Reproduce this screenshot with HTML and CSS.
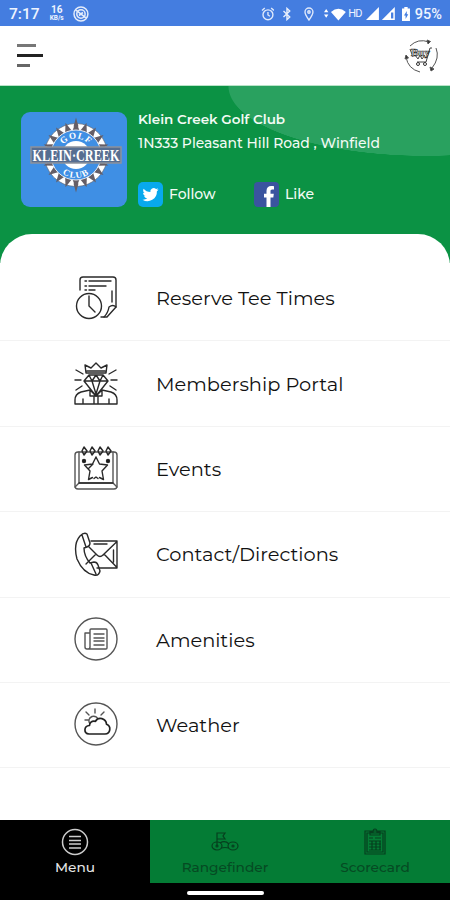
FILE: index.html
```html
<!DOCTYPE html>
<html lang="en">
<head>
<meta charset="utf-8">
<meta name="viewport" content="width=device-width, initial-scale=1">
<title>Klein Creek Golf Club</title>
<link rel="stylesheet" href="styles.css">
</head>
<body>
<div class="app">
  <div class="status">
    <span class="time">7:17</span>
    <span class="speed"><b>16</b><small>KB/s</small></span>
    <svg class="dnd" width="16" height="16" viewBox="0 0 16 16" fill="none" stroke="#e4ecfa"><circle cx="8" cy="8" r="7" stroke-width="1.5"/><circle cx="8" cy="8" r="4.2" stroke-width="1.5"/><path d="M3 4l10 8M6 9.5l4-3" stroke-width="1.6"/></svg>
    <svg class="alarm" width="14" height="14" viewBox="0 0 14 14" fill="none" stroke="#dfe9fb" stroke-width="1.4"><circle cx="7" cy="7.8" r="5"/><path d="M7 5v3l2 1.3M1 3.4L3.8 1M13 3.4L10.2 1"/></svg>
    <svg class="bt" width="10" height="14" viewBox="0 0 10 14" fill="none" stroke="#e8effc" stroke-width="1.4"><path d="M1.5 4l6.3 6L5 12.6V1.4L7.8 4 1.5 10"/></svg>
    <svg class="pin" width="10" height="14" viewBox="0 0 10 14" fill="none" stroke="#dfe9fb" stroke-width="1.4"><path d="M5 13C2 9 1 7 1 5a4 4 0 018 0c0 2-1 4-4 8z"/><circle cx="5" cy="5" r="1.2"/></svg>
    <svg class="net" width="22" height="14" viewBox="0 0 22 14" fill="#fff"><path d="M0 5.2L2.2 2l2.2 3.200zM0 7.500h4.400L2.200 10.700zM7 5q7.500-6.500 15 0l-7.500 8.500z"/></svg>
    <span class="hd">HD</span>
    <svg class="sig" width="30" height="14" viewBox="0 0 30 14"><path d="M13 0v13H0zM29 0v13H16z" fill="#fff"/><path d="M25.200 5.500h2.300v6h-2.300z" fill="#447de0"/></svg>
    <svg class="bat" width="8" height="14" viewBox="0 0 8 14"><path d="M2.300 0h3.400v1.500H8V14H0V1.500h2.300z" fill="#fff"/><path d="M4.800 4L2 8.500h1.600V12L6.300 7.300H4.800z" fill="#447de0"/></svg>
    <span class="pct">95%</span>
  </div>

  <header class="bar">
    <div class="burger"><i></i><i></i><i></i></div>
    <svg width="35" height="36" viewBox="0 0 35 36" fill="none" stroke="#555" stroke-width="1">
      <path d="M6 8Q14 0 25 4M32 10q4 10-4 20M16 34Q4 31 2 19" />
      <path d="M23 2l3.500 1.500L24 6zM26 29l1 4 3-2zM1 21l1-4 2.500 3z" fill="#333"/>
      <path d="M28 10h-2l-4 14h-9M9 19L6 11" stroke="#444"/>
      <circle cx="14" cy="26" r="1.500" stroke="#333"/><circle cx="21" cy="26" r="1.500" stroke="#333"/>
      <path d="M11 17l3 4 2-4 2 4 3-4" stroke="#444"/>
      <text x="7" y="18" class="buy">Buy</text>
    </svg>
  </header>

  <section class="hero">
    <svg class="logo" width="106" height="95" viewBox="0 0 106 95">
      <defs>
        <g id="spikes"><path id="sp" d="M-3.600-24L0-34 3.600-24z"/><use href="#sp" transform="rotate(18)"/><use href="#sp" transform="rotate(36)"/><use href="#sp" transform="rotate(54)"/><use href="#sp" transform="rotate(72)"/></g>
        <path id="arcTop" d="M-16.500 0A16.500 16.500 0 0116.500 0"/>
        <path id="arcBottom" d="M-23 0A23 23 0 0023 0"/>
      </defs>
      <g transform="translate(55 43)">
        <circle r="31.500" fill="#fff" stroke="#666a75" stroke-width=".7"/>
        <g fill="#655e66"><use href="#spikes"/><use href="#spikes" transform="rotate(90)"/><use href="#spikes" transform="rotate(180)"/><use href="#spikes" transform="rotate(270)"/></g>
        <path d="M0-37.500l2.500 9h-5zM0 37.500l2.500-9h-5z" fill="#655e66"/>
        <circle r="25" fill="#3f8fe4" stroke="#e2e9f3" stroke-width="1"/>
        <circle r="14" fill="#fff"/>
        <text class="arc"><textPath href="#arcTop" startOffset="50%">GOLF</textPath></text>
        <text class="arc"><textPath href="#arcBottom" startOffset="50%">CLUB</textPath></text>
        <path d="M-45-8h90V8h-90z" fill="#566e91" stroke="#8c939d" stroke-width="1.500"/>
        <text transform="scale(.72 1)" y="6" class="band">KLEIN·CREEK</text>
      </g>
    </svg>
    <div class="info">
      <div class="name">Klein Creek Golf Club</div>
      <div class="addr">1N333 Pleasant Hill Road , Winfield</div>
      <div class="social">
        <svg width="25" height="25" viewBox="0 0 25 25"><rect width="25" height="25" rx="5" fill="#08a9ed"/><path d="M20.500 7.600c-.6.300-1.200.4-1.900.5.700-.4 1.200-1 1.400-1.800-.6.400-1.300.6-2 .8a3.300 3.300 0 00-5.600 3c-2.700-.1-5.200-1.400-6.800-3.400-.9 1.500-.4 3.400 1 4.400-.5 0-1-.2-1.500-.4 0 1.600 1.100 3 2.600 3.300-.5.100-1 .1-1.500 0 .4 1.300 1.600 2.300 3.100 2.300A6.600 6.600 0 014.500 17.700 9.400 9.400 0 0018.900 9.300c.6-.4 1.200-1 1.600-1.700z" fill="#fff"/></svg>
        <span class="follow">Follow</span>
        <svg width="25" height="25" viewBox="0 0 25 25"><rect width="25" height="25" rx="4" fill="#3a549f"/><path d="M12.500 25v-9.500H10v-3.700h2.500V9c0-3.300 1.900-5 4.700-5 1.300 0 2.800.2 2.800.2v3.200h-1.700c-1.400 0-1.800.8-1.800 1.700v2.700h3.300l-.5 3.700h-2.800V25z" fill="#fff"/></svg>
        <span>Like</span>
      </div>
    </div>
  </section>

  <main class="menu">
    <a class="row">
      <svg width="44" height="46" viewBox="0 0 44 46" class="ic">
        <path d="M6 15V5q0-3 3-3h30q3 0 3 3v27l-9 10h-6"/><path d="M42 32q-3-3-7 0-1 6-5 10" /><path d="M38 16v11M11 6h1.500M15 6h22M11 11h1.500M15 11h17M11 15h1.500M15 15h6"/>
        <circle cx="15" cy="31" r="12.500"/><path d="M15 21v10l6 6"/>
      </svg><span>Reserve Tee Times</span></a>
    <a class="row">
      <svg width="44" height="46" viewBox="0 0 44 46" class="ic">
        <path d="M12 12L11 4l6 3 5-5 5 5 6-3-1 8zM13 10h18"/><path d="M15 14h14l5 6-12 15L10 20zM10 20h24M15 14l3 6 4-6 4 6 3-6M18 20l4 13 4-13"/>
        <path d="M1 43v-4q0-6 6-8l9-2 6 6 6-6 9 2q6 2 6 8v4zM16 29v6h12v-6M20 36v7M24 36v7M9 38v5M35 38v5"/><path d="M2 9l7 4M1 19h6M2 29l6-4M42 9l-7 4M43 19h-6M42 29l-6-4"/>
      </svg><span>Membership Portal</span></a>
    <a class="row">
      <svg width="44" height="46" viewBox="0 0 44 46" class="ic">
        <rect x="1" y="6" width="42" height="37" rx="3" stroke="#555"/><path d="M5 6v31h34V6M1 41l4-4M43 41l-4-4" stroke="#555"/><path d="M5 37h34"/>
        <path d="M10 1l3 4-3 4-2-4zM18 1l3 4-3 4-2-4zM26 1l3 4-3 4-2-4zM34 1l3 4-3 4-2-4z" stroke-width="1.500"/>
        <path d="M22 11l3.500 7 8 1-5.500 6 1.500 8.500-4-2M22 11l-3.500 7-8 1 5.500 6-1.500 8.500 4-2M20 32.500l2-1.500 2 1.500M15 22l4-4"/><circle cx="10" cy="15" r="1.500" fill="#111"/><circle cx="34" cy="15" r="1.500" fill="#111"/>
      </svg><span>Events</span></a>
    <a class="row">
      <svg width="44" height="46" viewBox="0 0 44 46" class="ic">
        <path d="M17 10h26v27H23M15 16l8 8q3 3 6 0L42.500 11M22 23L12 33M30 23l12.500 13M20 13h13M39.500 19v12"/>
        <path d="M6 5q4-4 7-2l3 9q0 3-3 4l-3 1q0 8 6 15l4-1q3 0 4 3l2 6q-1 5-6 4Q9 42 3 28 -1 13 6 5zM8 4l4 12M17 32l5 11"/>
      </svg><span>Contact/Directions</span></a>
    <a class="row">
      <svg width="44" height="46" viewBox="0 0 44 46" class="ic thin">
        <circle cx="22" cy="22" r="21"/><path d="M16 16V13q0-1 1-1h15q1 0 1 1v18q0 1-1 1H13q-2 0-2-2V16h5v14q0 2-2 2M20 17h10M20 21h10M20 24h10M20 28h10"/>
      </svg><span>Amenities</span></a>
    <a class="row">
      <svg width="44" height="46" viewBox="0 0 44 46" class="ic thin">
        <circle cx="22" cy="22" r="21"/><path d="M16 22q-3-5 2-7.500 4-1 6 2.500M21 7v4M12 10l3 3M30 10l-3 3M11 18h3"/><path class="cloud" d="M15 32h16a5 5 0 001.500-9.700c-.5-6-8-8-11-3-4-.8-6 1.500-6 4.200-6 .5-6 8-.5 8.500z"/>
      </svg><span>Weather</span></a>
  </main>

  <nav class="tabs">
    <div class="tab active">
      <svg width="28" height="28" viewBox="0 0 28 28" fill="none" stroke="#ccc" stroke-width="1.500"><circle cx="14" cy="14" r="12.500"/><path d="M8 8.500h12M8 12.500h12M8 16h12M8 20h12" stroke-width="1.300"/></svg>
      <span>Menu</span></div>
    <div class="tab">
      <svg width="28" height="28" viewBox="0 0 28 28" fill="none" stroke="#063f1e" stroke-width="1.200"><path d="M6 18V5h8l-2 3 2 3H6M9 15q5-3 9 1M10 20q4-1 8 0"/><ellipse cx="6" cy="18" rx="5" ry="4"/><ellipse cx="22" cy="18" rx="5" ry="4"/><circle cx="6" cy="18" r="1"/><circle cx="22" cy="18" r="1"/></svg>
      <span>Rangefinder</span></div>
    <div class="tab">
      <svg width="28" height="28" viewBox="0 0 28 28" fill="none" stroke="#063f1e" stroke-width="1.200"><path d="M4 3h20v23H4zM6 5h16v19H6zM9 4h3q0-3 2-3t2 3h3v3H9zM8 10h4M14 10h6M8 13h12M8 16h12M8 19h12M8 22h12M11 13v9M15 13v9M19 13v9"/></svg>
      <span>Scorecard</span></div>
  </nav>
  <div class="home"><i></i></div>
</div>
</body>
</html>
```
FILE: styles.css
```css
* { box-sizing: border-box; }
body { margin: 0; font-family: Montserrat, Inter, "Open Sans", sans-serif; }
.app { width: 450px; height: 900px; display: flex; flex-direction: column; background: #fff; overflow: hidden; }

.status { height: 26px; flex: none; background: #447de0; color: #eef4ff; display: flex; align-items: center; padding: 1px 8px 0 9px; font-family: Roboto, sans-serif; }
.time { font-size: 15.5px; width: 40px; font-weight: 500; }
.speed { width: 16px; display: flex; flex-direction: column; align-items: center; line-height: 1; }
.speed b { font-size: 10px; font-weight: 700; }
.speed small { font-size: 6.5px; font-weight: 700; }
.dnd { margin-left: 8px; }
.alarm { margin-left: 172px; }
.bt { margin-left: 8px; }
.pin { margin-left: 12px; }
.net { margin-left: 10px; }
.hd { font-size: 11px; margin-left: 2px; width: 14px; letter-spacing: -.8px; }
.sig { margin-left: 4px; }
.bat { margin-left: 6px; }
.pct { font-size: 14.5px; font-weight: 500; margin-left: 5px; padding-top: 2px; }

.bar { height: 60px; flex: none; display: flex; justify-content: space-between; align-items: center; padding: 0 11px 0 17px; border-bottom: 1px solid #b9e3c8; }
.burger { display: grid; gap: 7px; }
.burger i { height: 2.5px; background: #222; width: 26px; }
.burger i:first-child { width: 19px; background: #777; height: 3px; }
.burger i:last-child { width: 13px; background: #666; height: 3px; }
.buy { font: 700 11px "Liberation Serif", serif; fill: #fff; stroke: #333; stroke-width: .7px; }

.hero { height: 177px; flex: none; display: flex; padding: 26px 0 0 21px; background: radial-gradient(ellipse 198px 70px at 198px 0, #29a15f 99.500%, transparent 100%) 228px 0 / 222px 71px no-repeat, #0b9244; color: #f3fbf5; }
.logo { background: #3f8fe4; border-radius: 9px; flex: none; }
.arc { font: 700 9px "Liberation Serif", serif; fill: #fff; text-anchor: middle; letter-spacing: 1px; }
.band { font: 700 17px "Liberation Serif", serif; fill: #fff; text-anchor: middle; }
.info { margin-left: 11px; white-space: nowrap; }
.name { font-size: 13.5px; font-weight: 600; line-height: 16px; margin-top: -1px; }
.addr { font-size: 13.9px; font-weight: 500; line-height: 18px; margin-top: 7px; }
.social { display: flex; align-items: center; margin-top: 30px; font-size: 14px; font-weight: 500; line-height: 23px; }
.social span { margin-left: 6px; }
.social .follow { width: 85px; }

.menu { flex: 1; background: #fff; margin-top: -29px; border-radius: 32px 32px 0 0; padding-top: 22px; }
.row { height: 85.4px; display: flex; align-items: center; padding-left: 74px; border-bottom: 1px solid #f3f3f3; font-size: 19.4px; font-weight: 400; color: #111; }
.row span { margin-left: 38px; }
.ic { fill: none; stroke: #2a2a2a; stroke-width: 1.4; stroke-linecap: round; stroke-linejoin: round; }
.thin { stroke: #555; }
.cloud { stroke: #222; stroke-width: 1.700; fill: #fff; }

.tabs { height: 63px; flex: none; display: grid; grid-template-columns: repeat(3, 1fr); background: #047c35; }
.tab { display: flex; flex-direction: column; align-items: center; padding-top: 8px; font-size: 13.7px; font-weight: 500; line-height: 16px; color: #064a23; }
.tab span { margin-top: 3px; }
.active { background: #000; color: #e4e4e4; }
.home { height: 17px; flex: none; background: #000; display: flex; justify-content: center; padding-top: 8px; }
.home i { width: 77px; height: 4px; border-radius: 2px; background: #fff; }
```
